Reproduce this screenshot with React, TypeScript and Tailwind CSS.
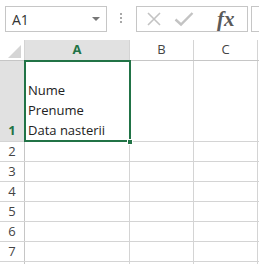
import React from "react";

const COLS = [
  { key: "A", w: "w-[105px]" },
  { key: "B", w: "w-[64px]" },
  { key: "C", w: "w-[64px]" },
];

const ROWS = [2, 3, 4, 5, 6, 7];

function FormulaBar() {
  return (
    <div className="flex h-10 items-start bg-white pt-[6px]">
      <div className="ml-[5px] flex h-[26px] w-[102px] items-center justify-between border border-[#c6c6c6] pl-[6px] pr-[6px]">
        <span className="text-[14px] text-[#333]">A1</span>
        <svg width="8" height="4" viewBox="0 0 8 4">
          <path d="M0 0h8L4 4z" fill="#777" />
        </svg>
      </div>
      <div className="ml-[13px] mt-[7px] flex flex-col gap-[2px]">
        <span className="h-[2px] w-[2px] bg-[#a8a8a8]" />
        <span className="h-[2px] w-[2px] bg-[#a8a8a8]" />
        <span className="h-[2px] w-[2px] bg-[#a8a8a8]" />
      </div>
      <div className="ml-[14px] flex h-[26px] w-[112px] items-center border border-[#c6c6c6]">
        <svg className="ml-[9px]" width="16" height="16" viewBox="0 0 16 16">
          <path d="M2 2L14 14M14 2L2 14" stroke="#c3c3c3" strokeWidth="1.6" />
        </svg>
        <svg className="ml-[12px]" width="20" height="16" viewBox="0 0 20 16">
          <path d="M1.5 8.5L7 13.5L18.5 2" stroke="#c3c3c3" strokeWidth="2.4" fill="none" />
        </svg>
        <span
          className="ml-[23px] text-[21px] font-bold italic leading-none text-[#5a5a5a]"
          style={{ fontFamily: '"Liberation Serif", serif' }}
        >
          fx
        </span>
      </div>
      <div className="ml-[3px] h-[26px] flex-1 border border-r-0 border-[#c6c6c6]" />
    </div>
  );
}

export default function App() {
  return (
    <div
      className="relative h-[264px] w-[259px] overflow-hidden bg-white text-[13px] text-[#222]"
      style={{ fontFamily: '"Open Sans", "Liberation Sans", sans-serif' }}
    >
      <FormulaBar />

      {/* column headers */}
      <div className="flex h-[21px] border-b border-[#c6c6c6]">
        <div className="relative w-[25px] shrink-0 border-r border-[#d4d4d4]">
          <svg className="absolute bottom-[2px] right-[3px]" width="13" height="13" viewBox="0 0 13 13">
            <path d="M13 0V13H0z" fill="#d5d5d5" />
          </svg>
        </div>
        {COLS.map((c) => (
          <div
            key={c.key}
            className={`${c.w} flex shrink-0 items-center justify-center border-r border-[#d4d4d4] ${
              c.key === "A" ? "bg-[#e1e1e1] font-bold text-[#217346]" : "text-[#444]"
            }`}
          >
            {c.key}
          </div>
        ))}
        <div className="flex-1" />
      </div>

      {/* row 1 */}
      <div className="flex h-[81px] border-b border-[#d4d4d4]">
        <div className="flex w-[25px] shrink-0 items-end justify-center border-r border-[#c6c6c6] bg-[#e1e1e1] pb-[1px] font-bold leading-[20px] text-[#217346]">
          1
        </div>
        <div className="flex w-[105px] shrink-0 flex-col justify-end border-r border-[#d4d4d4] pb-[1px] pl-[3px] leading-[20px]">
          <span>Nume</span>
          <span>Prenume</span>
          <span>Data nasterii</span>
        </div>
        <div className="w-[64px] shrink-0 border-r border-[#d4d4d4]" />
        <div className="w-[64px] shrink-0 border-r border-[#d4d4d4]" />
        <div className="flex-1" />
      </div>

      {ROWS.map((r) => (
        <div key={r} className="flex h-[20px] border-b border-[#d4d4d4]">
          <div className="flex w-[25px] shrink-0 items-center justify-center border-r border-[#c6c6c6] text-[#444]">
            {r}
          </div>
          <div className="w-[105px] shrink-0 border-r border-[#d4d4d4]" />
          <div className="w-[64px] shrink-0 border-r border-[#d4d4d4]" />
          <div className="w-[64px] shrink-0 border-r border-[#d4d4d4]" />
          <div className="flex-1" />
        </div>
      ))}

      {/* row 8, mostly below the fold */}
      <div className="flex h-[20px]">
        <div className="w-[25px] shrink-0 border-r border-[#c6c6c6]" />
        <div className="w-[105px] shrink-0 border-r border-[#d4d4d4]" />
        <div className="w-[64px] shrink-0 border-r border-[#d4d4d4]" />
        <div className="w-[64px] shrink-0 border-r border-[#d4d4d4]" />
        <div className="flex-1" />
      </div>

      {/* selection around A1 */}
      <div className="pointer-events-none absolute left-[24px] top-[60px] h-[82px] w-[107px] border-2 border-[#217346]" />
      <div className="pointer-events-none absolute left-[127px] top-[139px] h-[6px] w-[6px] border border-white bg-[#217346]" />
    </div>
  );
}
